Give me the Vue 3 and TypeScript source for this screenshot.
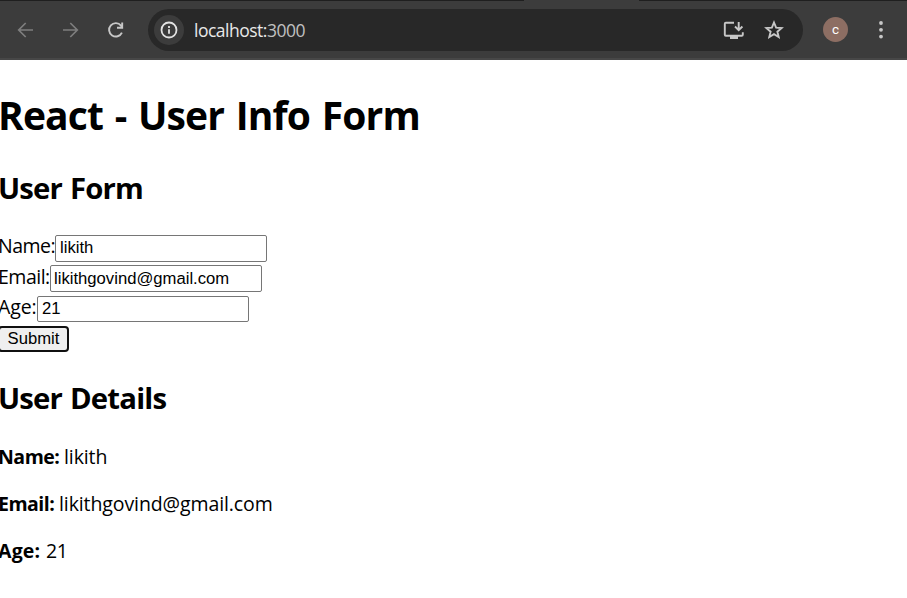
<script setup lang="ts">
import { reactive } from 'vue'

interface UserInfo {
  name: string
  email: string
  age: string
}

const user = reactive<UserInfo>({
  name: 'likith',
  email: 'likithgovind@gmail.com',
  age: '21',
})
</script>

<template>
  <div class="window">
    <header class="toolbar">
      <div class="tab-strip"><i class="strip-left"></i><i class="strip-right"></i></div>
      <nav class="nav">
        <svg class="dim" width="24" height="24" viewBox="0 0 24 24"><path d="M20 12H6M12.7 5 5.7 12l7 7" /></svg>
        <svg class="dim" width="24" height="24" viewBox="0 0 24 24"><path d="M5 12H19M12.3 5l7 7-7 7" /></svg>
        <svg class="reload" width="24" height="24" viewBox="0 0 24 24"><path d="M18.9 14.6a6.7 6.7 0 1 1-.9-7l1.5 1.7M19.2 4.6v5.2h-5.2" /></svg>
      </nav>
      <div class="address">
        <span class="info">
          <svg width="20" height="20" viewBox="0 0 20 20"><circle cx="10" cy="10" r="7.5" /><path d="M10 9.2v4.6M10 6v1.9" /></svg>
        </span>
        <span class="url">localhost:<span class="port">3000</span></span>
        <svg class="install" width="24" height="24" viewBox="0 0 24 24"><path d="M13 4.8H4.8q-1 0-1 1v11q0 1 1 1h16q1 0 1-1v-2.5M17.7 4v7M14 8.5l3.7 3.7 3.7-3.7" /><path class="solid" d="M9 18h8v3H9z" /></svg>
        <svg class="star" width="24" height="24" viewBox="0 0 24 24"><path d="m12 4.5 2.1 5.1 5.5.5-4.2 3.6 1.3 5.4-4.7-2.9-4.7 2.9 1.3-5.4-4.2-3.6 5.5-.5z" /></svg>
      </div>
      <span class="avatar">c</span>
      <svg class="menu" width="8" height="20" viewBox="0 0 8 20"><circle cx="4" cy="3" r="1.9" /><circle cx="4" cy="9.8" r="1.9" /><circle cx="4" cy="16.6" r="1.9" /></svg>
    </header>

    <main class="page">
      <h1>React - User Info Form</h1>
      <h2 class="form-title">User Form</h2>
      <form @submit.prevent>
        <label class="row name"><span>Name:</span><input v-model="user.name" type="text" /></label>
        <label class="row email"><span>Email:</span><input v-model="user.email" type="text" /></label>
        <label class="row age"><span>Age:</span><input v-model="user.age" type="text" /></label>
        <button type="submit">Submit</button>
      </form>
      <h2 class="details-title">User Details</h2>
      <p><strong class="k-name">Name:</strong><span class="v-name">{{ user.name }}</span></p>
      <p><strong class="k-email">Email:</strong><span class="v-email">{{ user.email }}</span></p>
      <p><strong class="k-age">Age:</strong><span class="v-age">{{ user.age }}</span></p>
    </main>
  </div>
</template>

<style>
body {
  background: #fff;
  overflow: hidden;
}
</style>

<style scoped>
.window {
  width: 907px;
  height: 598px;
  overflow: hidden;
  background: #fff;
  color: #000;
  font-family: "Open Sans", "Noto Sans", sans-serif;
}
.toolbar {
  position: relative;
  box-sizing: border-box;
  height: 60px;
  display: flex;
  align-items: center;
  background: #3c3c3c;
  border-bottom: 2px solid #474747;
  padding-top: 1px;
}
.tab-strip {
  position: absolute;
  inset: 0 0 auto;
  height: 1px;
  display: flex;
  justify-content: space-between;
}
.tab-strip i {
  background: #1f1f1f;
}
.strip-left {
  width: 524px;
}
.strip-right {
  width: 268px;
}
svg {
  flex: none;
  fill: none;
  stroke: #c7c7c7;
  stroke-width: 1.9;
}
.nav {
  display: flex;
  gap: 21px;
  padding-left: 13px;
  width: 135px;
}
.dim {
  stroke: #7e7e7e;
  stroke-width: 1.7;
}
.address {
  display: flex;
  align-items: center;
  box-sizing: border-box;
  width: 655px;
  height: 42px;
  border-radius: 21px;
  background: #282828;
  padding: 0 17.5px 0 6px;
}
.info {
  display: flex;
  align-items: center;
  justify-content: center;
  width: 30px;
  height: 30px;
  border-radius: 50%;
  background: #3c3c3c;
}
.info svg {
  stroke: #e3e3e3;
  stroke-width: 1.8;
}
.url {
  margin-left: 10px;
  font-size: 17.5px;
  letter-spacing: -0.5px;
  color: #e8e8e8;
}
.port {
  color: #c0c0c0;
}
.install {
  margin-left: auto;
  margin-right: 16.5px;
}
.install .solid {
  fill: #c7c7c7;
  stroke: none;
}
.avatar {
  width: 25px;
  height: 25px;
  margin-left: 20px;
  border-radius: 50%;
  background: #8d6e63;
  color: #fff;
  font: 400 13.5px/24px Roboto, sans-serif;
  text-align: center;
}
.menu {
  margin-left: 28.5px;
}
.menu circle {
  fill: #c7c7c7;
  stroke: none;
}
.page {
  padding-top: 28px;
}
h1,
h2,
p {
  margin: 0;
  white-space: nowrap;
}
h1 {
  margin-left: -2px;
  font-size: 39px;
  line-height: 54px;
  letter-spacing: -0.85px;
  word-spacing: 2.3px;
}
h2 {
  margin-left: -2px;
  font-size: 29.3px;
  line-height: 40px;
  letter-spacing: -0.8px;
  word-spacing: 1px;
}
.form-title {
  margin-top: 26px;
}
form {
  display: flex;
  flex-direction: column;
  align-items: flex-start;
  margin-top: 27px;
}
.row {
  display: flex;
  height: 27px;
  margin-bottom: 3px;
}
.row span {
  margin-left: -2px;
  font-size: 19.5px;
  line-height: 22px;
  white-space: nowrap;
  letter-spacing: -0.5px;
}
.name span {
  width: 57px;
}
.email span {
  width: 52px;
  line-height: 24px;
}
.email {
  margin-bottom: 4px;
}
.age {
  height: 26px;
  margin-bottom: 4px;
}
.age span {
  width: 39px;
  letter-spacing: -0.1px;
}
input {
  box-sizing: border-box;
  width: 212px;
  height: 100%;
  margin: 0;
  padding: 0 4px 2px;
  border: 1px solid #767676;
  border-radius: 2px;
  outline: none;
  background: #fff;
  color: #000;
  font: 16.67px "Liberation Sans", Arial, sans-serif;
}
.email input {
  padding: 0 3px;
}
.age input {
  padding-bottom: 0;
}
button {
  box-sizing: border-box;
  width: 71px;
  height: 26px;
  margin: 0 0 0 -2px;
  padding: 0;
  border: 2px solid #101010;
  border-radius: 4px;
  background: #efefef;
  color: #000;
  font: 16.67px "Liberation Sans", Arial, sans-serif;
}
.details-title {
  margin-top: 26px;
  margin-bottom: 26px;
}
p {
  display: flex;
  height: 26px;
  margin: 0 0 21px -2px;
  font-size: 19.5px;
  line-height: 26px;
  letter-spacing: -0.1px;
}
strong {
  letter-spacing: -0.5px;
}
.k-name {
  width: 66px;
}
.k-email {
  width: 61px;
}
.k-age {
  width: 48px;
  letter-spacing: 0.2px;
}
.v-age {
  letter-spacing: -0.4px;
}
</style>
